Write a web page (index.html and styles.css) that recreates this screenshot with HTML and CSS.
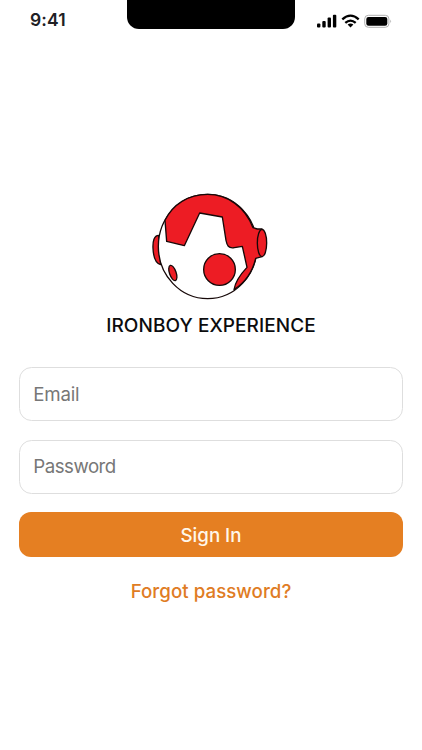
FILE: index.html
```html
<!DOCTYPE html>
<html lang="en">
<head>
    <meta charset="UTF-8">
    <meta name="viewport" content="width=device-width, initial-scale=1.0">
    <title>Ironboy Experience</title>
    <link rel="stylesheet" href="styles.css">
</head>
<body>
    <header class="status-bar">
        <div class="time"><span>9:41</span></div>
        <div class="notch"></div>
        <div class="status-icons">
            <svg width="80" height="16" viewBox="0 0 80 16">
                <!-- Signal -->
                <rect x="1" y="9.4" width="3.4" height="4" rx="1"/>
                <rect x="6.3" y="7" width="3.4" height="6.4" rx="1"/>
                <rect x="11.6" y="3.6" width="3.4" height="9.8" rx="1"/>
                <rect x="16.900" y="0.8" width="3.4" height="12.6" rx="1"/>
                <!-- Wifi -->
                <g fill="none" stroke="#000" stroke-width="2.3">
                    <path d="M26.3 5.3 Q34.5 -2 42.7 5.3"/>
                    <path d="M29.3 8.9 Q34.5 4.3 39.7 8.9"/>
                </g>
                <path d="M31.6 10.6 Q34.5 8.5 37.4 10.6 L34.5 13.5 Z"/>
                <!-- Battery -->
                <rect x="48.700" y="1.300" width="24.2" height="12" rx="3.6" fill="#fff" stroke="#b0b0b0"/>
                <rect x="50.300" y="2.900" width="21" height="8.800" rx="2.2"/>
                <path d="M74.300 5.4 Q76.100 7.2 74.300 9.2 Z" fill="#a8a8a8"/>
            </svg>
        </div>
    </header>

    <main class="login">
        <svg class="logo" viewBox="0 0 420 360" fill="#ed1c24" stroke="#160808" stroke-width="4" stroke-linejoin="round">
            <!-- Left ear -->
            <path d="M56 151 C42 151 38 170 39 190 C40 215 47 235 62 239 Z"/>
            <!-- Head -->
            <ellipse cx="203" cy="184.500" rx="148" ry="156.500" fill="#fff"/>
            <!-- Helmet with right ear -->
            <path d="M75 106 C98 58 145 28 203 28 C263 28 316 67 339 128 L352 132 L366 132 L366 215 L347 220 C338 258 314 293 282 314 C286 288 304 265 321 247 L307 184 L283 188 C265 191 261 181 258 166 L247 96 L179 84 L133 182 L80 169 Z"/>
            <ellipse cx="366" cy="174" rx="14" ry="41"/>
            <!-- Eyes -->
            <circle cx="238.500" cy="253.500" r="47.500"/>
            <ellipse cx="98.500" cy="264" rx="10" ry="24" transform="rotate(-19 98.500 264)"/>
        </svg>
        <h1>IRONBOY EXPERIENCE</h1>
        <form>
            <input class="field" type="email" placeholder="Email" aria-label="Email">
            <input class="field password" type="password" placeholder="Password" aria-label="Password">
            <button type="submit">Sign In</button>
        </form>
        <a class="forgot" href="#">Forgot password?</a>
    </main>
</body>
</html>
```

FILE: styles.css
```css
* { box-sizing: border-box; }
body { margin: 0; min-height: 750px; background: #fff; font-family: Inter, "Liberation Sans", sans-serif; }

/* Status bar */
.status-bar { display: flex; height: 40px; }
.time { width: 127px; padding: 9px 0 0 30px; font-size: 17.5px; line-height: 22px; font-weight: 600; letter-spacing: 0.1px; color: #202024; }
.notch { width: 168px; height: 29px; background: #000; border-radius: 0 0 12px 12px; }
.status-icons { padding: 13.500px 0 0 21px; }
.status-icons svg { display: block; }

/* Login */
.login { display: flex; flex-direction: column; align-items: center; padding: 145px 19.3px 0; }
.logo { width: 140px; height: 120px; margin-right: 2px; }
h1 { margin: 9px 0 0; font-size: 19px; line-height: 24px; font-weight: 500; letter-spacing: 0.08px; color: #0c0c0e; }
form { display: flex; flex-direction: column; width: 100%; margin-top: 29px; }
.field { width: 100%; height: 54px; margin-bottom: 18.500px; padding: 0 13px; background: #fff; border: 1px solid #dedede; border-radius: 12.500px; font-family: inherit; font-size: 18.7px; letter-spacing: -0.2px; color: #222; outline: none; }
.password { letter-spacing: -0.5px; }
.field::placeholder { color: #777; opacity: 1; }
button { height: 45px; padding: 1px 0 0; border: none; border-radius: 12px; background: #e57f22; color: #fff7eb; font-family: inherit; font-size: 18.7px; font-weight: 500; cursor: pointer; }
.forgot { margin-top: 23px; font-size: 18.7px; line-height: 24px; font-weight: 500; letter-spacing: 0.05px; color: #df7c24; text-decoration: none; }
```
